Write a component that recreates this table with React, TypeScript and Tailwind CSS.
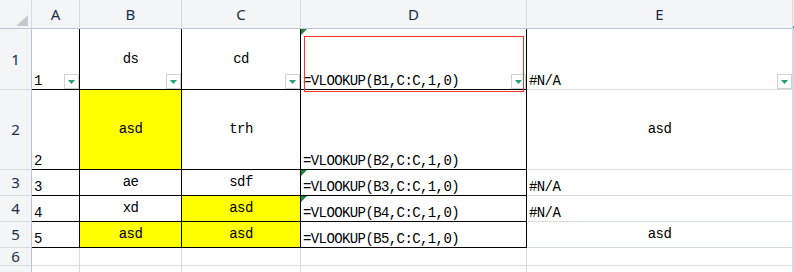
import React from "react";

type Cell = {
  text?: string;
  center?: boolean;
  yellow?: boolean;
  dd?: boolean;
  tri?: boolean;
  black?: boolean;
};

const cellFont = { fontFamily: '"Liberation Mono", "DejaVu Sans Mono", monospace' };
const headFont = { fontFamily: '"Noto Sans", "Liberation Sans", sans-serif' };

const f = (n: number) => `=VLOOKUP(B${n},C:C,1,0)`;

const rows: Cell[][] = [
  [
    { text: "1", dd: true, black: true },
    { text: "ds", center: true, dd: true, black: true },
    { text: "cd", center: true, dd: true, black: true },
    { text: f(1), dd: true, tri: true, black: true },
    { text: "#N/A", dd: true },
  ],
  [
    { text: "2", black: true },
    { text: "asd", center: true, yellow: true, black: true },
    { text: "trh", center: true, black: true },
    { text: f(2), black: true },
    { text: "asd", center: true },
  ],
  [
    { text: "3", black: true },
    { text: "ae", center: true, black: true },
    { text: "sdf", center: true, black: true },
    { text: f(3), tri: true, black: true },
    { text: "#N/A" },
  ],
  [
    { text: "4", black: true },
    { text: "xd", center: true, black: true },
    { text: "asd", center: true, yellow: true, black: true },
    { text: f(4), tri: true, black: true },
    { text: "#N/A" },
  ],
  [
    { text: "5", black: true },
    { text: "asd", center: true, yellow: true, black: true },
    { text: "asd", center: true, yellow: true, black: true },
    { text: f(5), black: true },
    { text: "asd", center: true },
  ],
  [{}, {}, {}, {}, {}],
  [{}, {}, {}, {}, {}],
];

function Dropdown() {
  return (
    <div className="absolute right-0 bottom-0 w-[15px] h-[15px] border border-[#d2d2d2] bg-white flex items-center justify-center">
      <svg width="7" height="4" viewBox="0 0 7 4" className="mt-[1px]">
        <polygon points="0,0 7,0 3.5,4" fill="#1fa276" />
      </svg>
    </div>
  );
}

function GridCell({ cell, row, col }: { cell: Cell; row: number; col: number }) {
  const border = cell.black ? "border-black" : "border-[#d6dbe3]";
  return (
    <div
      className={`relative flex border-r border-b ${border} ${cell.yellow ? "bg-[#ffff00]" : "bg-white"} ${
        cell.center ? "items-center justify-center" : "items-end pl-[2px]"
      } text-[14px] leading-[15px] tracking-[-0.6px] text-black whitespace-nowrap`}
      style={cellFont}
    >
      {cell.text && <span>{cell.text}</span>}
      {cell.tri && (
        <svg width="6" height="6" viewBox="0 0 6 6" className="absolute left-0 top-0">
          <polygon points="0,0 6,0 0,6" fill="#18863c" />
        </svg>
      )}
      {cell.dd && <Dropdown />}
      {row === 0 && col === 3 && (
        <div className="absolute z-10 left-[3px] top-[7px] w-[220px] h-[56px] ring-1 ring-inset ring-[#ff3030]" />
      )}
    </div>
  );
}

export default function App() {
  return (
    <div className="w-[794px] h-[272px] overflow-hidden bg-white">
      <div className="grid grid-cols-[32px_48px_102px_119px_226px_266px_1fr] grid-rows-[29px_61px_80px_26px_26px_26px_18px_30px]">
        {/* header */}
        <div className="relative bg-[#f4f5f7] border-r border-b border-r-[#d6dbe3] border-b-[#bcc5d4]">
          <svg width="12" height="11" viewBox="0 0 12 11" className="absolute left-[16px] top-[15px]">
            <polygon points="12,0 12,11 0,11" fill="#c6cad0" />
          </svg>
        </div>
        {["A", "B", "C", "D", "E"].map((c) => (
          <div
            key={c}
            className="bg-[#f4f5f7] border-r border-b border-r-[#d6dbe3] border-b-[#bcc5d4] flex items-center justify-center text-[15px] text-[#1b2d48]"
            style={headFont}
          >
            {c}
          </div>
        ))}
        <div className="bg-[#eef0f3] border-b border-b-[#bcc5d4] relative">
          <div className="absolute left-0 bottom-0 w-[2px] h-[2px] bg-[#1fa276]" />
        </div>

        {rows.map((r, ri) => (
          <React.Fragment key={ri}>
            <div
              className="bg-[#f4f5f7] border-r border-b border-r-[#bcc5d4] border-b-[#d6dbe3] flex items-center justify-center text-[15px] text-[#1b2d48]"
              style={headFont}
            >
              {ri + 1}
            </div>
            {r.map((cell, ci) => (
              <GridCell key={ci} cell={cell} row={ri} col={ci} />
            ))}
            <div className="bg-[#eef0f3] border-l border-[#d6dbe3]" />
          </React.Fragment>
        ))}
      </div>
    </div>
  );
}
